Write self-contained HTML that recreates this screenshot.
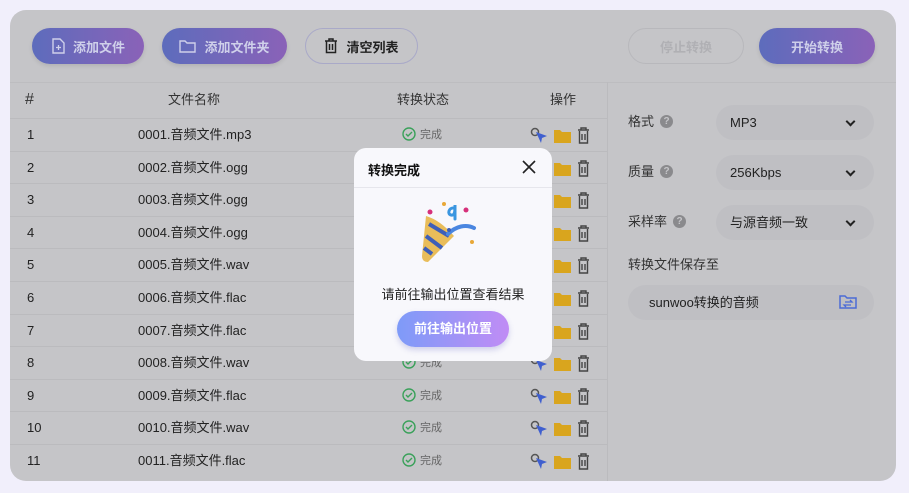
<!DOCTYPE html><html><head><meta charset="utf-8"><style>
*{margin:0;padding:0;box-sizing:border-box}
body{width:909px;height:493px;background:#f1effb;font-family:"Liberation Sans","Noto Sans CJK SC",sans-serif;position:relative;overflow:hidden}
.app{position:absolute;left:10px;top:10px;width:886px;height:471px;border-radius:16px;background:#c5c5c8;overflow:hidden}
.btn{position:absolute;height:36px;border-radius:18px;color:#cfd0ea;font-size:13px;font-weight:bold;display:flex;align-items:center;justify-content:center;gap:8px}
.grad{background:linear-gradient(90deg,#5d6cbc,#8a62b8);box-shadow:0 2px 4px rgba(0,0,0,.1)}
.out{border:1px solid #a9a9c8;color:#222}
.hline{position:absolute;left:0;right:0;top:72px;height:1px;background:#bdbdc0}
.vline{position:absolute;left:597px;top:72px;bottom:0;width:1px;background:#bbbbbe}
.th{position:absolute;top:72px;height:36px;line-height:36px;font-size:13px;color:#333}
.row{position:absolute;left:0;width:597px;height:33px;border-top:1px solid #bbbbbe;font-size:13px;color:#222}
.row span{position:absolute;top:0;height:32px;line-height:32px;white-space:nowrap}
.st{color:#666;font-size:11px}
.st svg{vertical-align:middle;margin-right:4px;position:relative;top:-1px}
.lbl{position:absolute;left:618px;height:20px;line-height:20px;font-size:13px;color:#333}
.q{display:inline-block;width:13px;height:13px;border-radius:50%;background:#8a8a8d;color:#c5c5c8;font-size:10px;font-weight:bold;text-align:center;line-height:13px;margin-left:6px;vertical-align:middle;position:relative;top:-1px}
.sel{position:absolute;left:706px;width:158px;height:35px;line-height:35px;border-radius:18px;background:#bfbfc3;font-size:13px;color:#222;padding:0 14px}
.sel:after{content:"";position:absolute;right:20px;top:13px;width:5px;height:5px;border-right:2px solid #222;border-bottom:2px solid #222;transform:rotate(45deg)}
.modal{position:absolute;left:354px;top:148px;width:198px;height:213px;background:#f8f8fc;border-radius:12px}
</style></head><body>
<div class="app">
<div class="btn grad" style="left:22px;top:18px;width:112px"><svg width="14" height="16"><path d="M2 1h7l4 4v10H2z" fill="none" stroke="#cfd0ea" stroke-width="1.4"/><path d="M7.5 7v5M5 9.5h5" stroke="#cfd0ea" stroke-width="1.3"/></svg>添加文件</div>
<div class="btn grad" style="left:152px;top:18px;width:125px"><svg width="17" height="14"><path d="M1 2h5l2 2h8v9H1z" fill="none" stroke="#cfd0ea" stroke-width="1.4"/></svg>添加文件夹</div>
<div class="btn out" style="left:295px;top:18px;width:113px"><svg width="14" height="16"><path d="M1 3h12M5 3V1h4v2M2.5 3.5v11h9v-11M5.5 6v6M8.5 6v6" fill="none" stroke="#222" stroke-width="1.5"/></svg>清空列表</div>
<div class="btn out" style="left:618px;top:18px;width:116px;color:#b0b0b4;border-color:#b8b8bc">停止转换</div>
<div class="btn grad" style="left:749px;top:18px;width:116px">开始转换</div>
<div class="hline"></div><div class="vline"></div>
<div class="th" style="left:15px;font-size:16px">#</div>
<div class="th" style="left:158px">文件名称</div>
<div class="th" style="left:387px">转换状态</div>
<div class="th" style="left:540px">操作</div>
<div id="rows"></div>
<div class="lbl" style="top:102px">格式<span class="q">?</span></div>
<div class="sel" style="top:95px">MP3</div>
<div class="lbl" style="top:152px">质量<span class="q">?</span></div>
<div class="sel" style="top:145px">256Kbps</div>
<div class="lbl" style="top:202px">采样率<span class="q">?</span></div>
<div class="sel" style="top:195px">与源音频一致</div>
<div class="lbl" style="top:245px">转换文件保存至</div>
<div class="sel" style="left:618px;width:246px;top:275px;padding-left:21px">sunwoo转换的音频</div>
<div style="position:absolute;left:826px;top:282px;width:24px;height:20px;background:#bfbfc3"></div>
<svg style="position:absolute;left:829px;top:284px" width="18" height="15"><path d="M1 2h5l2 2h9v10H1z" fill="none" stroke="#4b6bd6" stroke-width="1.5"/><path d="M6 8h7l-2-2M12 11H5l2 2" fill="none" stroke="#4b6bd6" stroke-width="1.3"/></svg>
</div>
<div class="modal">
<div style="position:absolute;left:14px;top:12px;font-size:13px;font-weight:bold;color:#111">转换完成</div>
<svg style="position:absolute;left:168px;top:12px" width="14" height="14"><path d="M1 1l12 12M13 1L1 13" stroke="#222" stroke-width="1.6"/></svg>
<div style="position:absolute;left:0;right:0;top:39px;height:1px;background:#e6e6ec"></div>
<svg style="position:absolute;left:66px;top:52px" width="66" height="70"><path d="M6 16Q20 20 34 36L8 62Q2 62 2 56z" fill="#e9bd5a"/><path d="M9 24l20 12M6 36l16 12M4 48l8 6" stroke="#3e5fb8" stroke-width="4"/><path d="M28 34c8-8 18-10 26-6" fill="none" stroke="#4a86e0" stroke-width="4" stroke-linecap="round"/><path d="M33 8c-4 0-6 6-2 7s4-4 4-10v14" fill="none" stroke="#3a96e0" stroke-width="3" stroke-linecap="round"/><circle cx="10" cy="12" r="2.5" fill="#d6307a"/><circle cx="24" cy="4" r="2" fill="#e8a838"/><circle cx="46" cy="10" r="2.5" fill="#d6307a"/><circle cx="52" cy="42" r="2" fill="#e8a838"/><circle cx="29" cy="30" r="2" fill="#3e5fb8"/></svg>
<div style="position:absolute;left:0;right:0;top:136px;text-align:center;font-size:13px;color:#222">请前往输出位置查看结果</div>
<div style="position:absolute;left:43px;top:163px;width:112px;height:36px;border-radius:18px;background:linear-gradient(90deg,#7e9bf8,#c08cf5);color:#fff;font-size:13px;font-weight:bold;text-align:center;line-height:36px;box-shadow:0 3px 6px rgba(120,120,200,.3)">前往输出位置</div>
</div>
<script>
var names=["0001.音频文件.mp3","0002.音频文件.ogg","0003.音频文件.ogg","0004.音频文件.ogg","0005.音频文件.wav","0006.音频文件.flac","0007.音频文件.flac","0008.音频文件.wav","0009.音频文件.flac","0010.音频文件.wav","0011.音频文件.flac"];
var h="";for(var i=0;i<11;i++){var t=108+i*32.6;h+='<div class="row" style="top:'+t+'px"><span style="left:17px">'+(i+1)+'</span><span style="left:128px">'+names[i]+'</span><span class="st" style="left:392px"><svg width="14" height="14"><circle cx="7" cy="7" r="6" fill="none" stroke="#3aa15a" stroke-width="1.4"/><path d="M4 7l2 2 4-4" fill="none" stroke="#3aa15a" stroke-width="1.4"/></svg>完成</span><span style="left:520px;top:8px;height:17px;line-height:0"><svg width="62" height="17"><circle cx="5" cy="5" r="3.5" fill="none" stroke="#555" stroke-width="1.5"/><path d="M6 5l11 4-5 2-1 5z" fill="#3f5fcf"/><path d="M24 3h6l2 2h9v11H24z" fill="#d9a51e"/><path d="M48 3h11M51 3V1h5v2M49.5 4v12h8V4M52 7v6M55 7v6" fill="none" stroke="#444" stroke-width="1.4"/></svg></span></div>'}
document.getElementById("rows").innerHTML=h;
</script>
</body></html>
